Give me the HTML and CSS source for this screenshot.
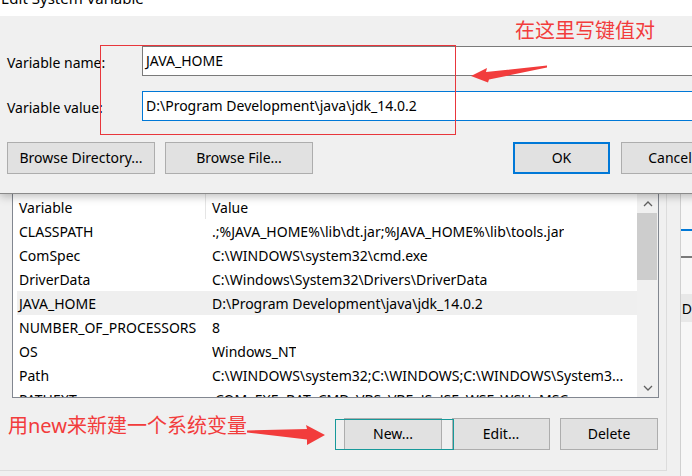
FILE: index.html
```html
<!DOCTYPE html>
<html>
<head>
<meta charset="utf-8">
<link rel="stylesheet" href="styles.css">
</head>
<body>
<div class="screen">
  <div class="dialog">
    <div class="titlebar"><span class="title">Edit System Variable</span></div>
    <div class="dlg-body">
      <div class="field">
        <span class="label">Variable name:</span>
        <div class="input">JAVA_HOME</div>
      </div>
      <div class="field">
        <span class="label">Variable value:</span>
        <div class="input focus">D:\Program Development\java\jdk_14.0.2</div>
      </div>
      <div class="btnrow">
        <div class="btngroup">
          <div class="btn wide">Browse Directory...</div>
          <div class="btn wide">Browse File...</div>
        </div>
        <div class="btngroup right">
          <div class="btn default">OK</div>
          <div class="btn">Cancel</div>
        </div>
      </div>
    </div>
  </div>

  <div class="bg-area">
    <div class="bg-window">
      <div class="listbox">
        <div class="table">
          <div class="thead">
            <div class="th c1">Variable</div>
            <div class="th c2">Value</div>
          </div>
          <div class="row"><span class="c1">CLASSPATH</span><span class="c2">.;%JAVA_HOME%\lib\dt.jar;%JAVA_HOME%\lib\tools.jar</span></div>
          <div class="row"><span class="c1">ComSpec</span><span class="c2">C:\WINDOWS\system32\cmd.exe</span></div>
          <div class="row"><span class="c1">DriverData</span><span class="c2">C:\Windows\System32\Drivers\DriverData</span></div>
          <div class="row sel"><span class="c1">JAVA_HOME</span><span class="c2">D:\Program Development\java\jdk_14.0.2</span></div>
          <div class="row"><span class="c1">NUMBER_OF_PROCESSORS</span><span class="c2">8</span></div>
          <div class="row"><span class="c1">OS</span><span class="c2">Windows_NT</span></div>
          <div class="row"><span class="c1">Path</span><span class="c2">C:\WINDOWS\system32;C:\WINDOWS;C:\WINDOWS\System3...</span></div>
          <div class="row"><span class="c1">PATHEXT</span><span class="c2">.COM;.EXE;.BAT;.CMD;.VBS;.VBE;.JS;.JSE;.WSF;.WSH;.MSC</span></div>
        </div>
        <div class="scrollbar">
          <div class="sb-btn"><svg width="10" height="6" viewBox="0 0 10 6"><path d="M1 5 L5 1 L9 5" fill="none" stroke="#606060" stroke-width="1.3"/></svg></div>
          <div class="sb-thumb"></div>
          <div class="sb-track"></div>
          <div class="sb-btn"><svg width="10" height="6" viewBox="0 0 10 6"><path d="M1 1 L5 5 L9 1" fill="none" stroke="#606060" stroke-width="1.3"/></svg></div>
        </div>
      </div>
      <div class="actions">
        <div class="btn">New...</div>
        <div class="btn">Edit...</div>
        <div class="btn">Delete</div>
      </div>
    </div>
    <div class="side-strip">
      <div class="side-panel">
        <div class="side-blue"></div>
        <div class="side-grey"></div>
        <div class="side-row">D</div>
      </div>
    </div>
  </div>

  <div class="anno-rect-red"></div>
  <div class="anno-text-top">在这里写键值对</div>
  <svg class="anno-arrow-top" width="692" height="476" viewBox="0 0 692 476">
    <path d="M471 76 L487 68 L486 72 L547 65.5 L547 67.5 L489 79.5 L488 82.5 Z" fill="#f23c3c"/>
  </svg>
  <div class="anno-text-bottom">用new来新建一个系统变量</div>
  <svg class="anno-arrow-bottom" width="692" height="476" viewBox="0 0 692 476">
    <path d="M247 430.5 L307 429 L306 425 L325 435 L307 445 L307 439.5 L247 432.5 Z" fill="#f23c3c"/>
  </svg>
  <div class="anno-rect-teal"></div>
</div>
</body>
</html>
```

FILE: styles.css
```css
* { box-sizing: border-box; }
html, body { margin: 0; padding: 0; }
body {
  width: 692px;
  height: 476px;
  overflow: hidden;
  background: #f0f0f0;
  font-family: "Segoe UI", "Noto Sans", sans-serif;
  font-size: 14px;
  color: #000;
}
.screen {
  position: relative;
  width: 692px;
  height: 476px;
  overflow: hidden;
}

/* ---------- Edit dialog ---------- */
.dialog {
  position: relative;
  z-index: 2;
  width: 760px;
  height: 194px;
  background: #f0f0f0;
  border-bottom: 1px solid #8a8a8a;
  box-shadow: 0 2px 9px rgba(0, 0, 0, 0.28);
}
.titlebar {
  height: 16px;
  background: #fff;
  overflow: hidden;
}
.title {
  display: block;
  margin-top: -12px;
  line-height: 20px;
  font-size: 15px;
  padding-left: 1px;
}
.dlg-body {
  padding: 30px 0 0 7px;
}
.field {
  display: flex;
  align-items: center;
  height: 30px;
  margin-bottom: 15px;
}
.label {
  width: 135px;
  padding-top: 2px;
}
.input {
  flex: 1;
  height: 30px;
  background: #fff;
  border: 1px solid #7a7a7a;
  padding: 3px 3px 0;
  line-height: 22px;
}
.input.focus { border-color: #0078d7; }
.btnrow {
  display: flex;
  margin-top: 21px;
}
.btngroup { display: flex; gap: 10px; }
.btngroup.right { margin-left: 200px; gap: 11px; }
.btn {
  height: 32px;
  width: 98px;
  background: #e1e1e1;
  border: 1px solid #adadad;
  display: flex;
  align-items: center;
  justify-content: center;
  padding-bottom: 1px;
}
.btn.wide { width: 148px; }
.btn.default { border: 2px solid #0078d7; width: 97px; }

/* ---------- background window ---------- */
.bg-area {
  display: flex;
  height: 282px;
}
.bg-window {
  width: 673px;
  height: 277px;
  border-right: 1px solid #dcdcdc;
  border-bottom: 1px solid #dcdcdc;
  padding-left: 12px;
}
.listbox {
  width: 647px;
  height: 204px;
  display: flex;
  background: #fff;
  border: 1px solid #828790;
  border-top: none;
}
.table {
  width: 624px;
  overflow: hidden;
}
.thead {
  display: flex;
  height: 25px;
  align-items: stretch;
}
.th {
  display: flex;
  align-items: center;
  padding-top: 1px;
}
.th.c1 {
  width: 193px;
  padding-left: 6px;
  border-right: 1px solid #e5e5e5;
}
.th.c2 { padding-left: 6px; }
.row {
  display: flex;
  align-items: center;
  height: 24px;
  margin-left: 4px;
  padding-left: 2px;
  white-space: nowrap;
}
.row.sel { background: #efefef; }
.row .c1 { width: 193px; flex: none; }
.row .c2 { overflow: hidden; }
.scrollbar {
  width: 21px;
  display: flex;
  flex-direction: column;
  background: #f0f0f0;
}
.sb-btn {
  height: 19px;
  display: flex;
  align-items: center;
  justify-content: center;
}
.sb-thumb {
  height: 67px;
  margin-right: 1px;
  background: #cdcdcd;
}
.sb-track { flex: 1; }
.actions {
  width: 647px;
  display: flex;
  justify-content: flex-end;
  gap: 10px;
  margin-top: 20px;
  padding-right: 1px;
}

/* ---------- right strip (window behind) ---------- */
.side-strip {
  flex: 1;
  padding-left: 13px;
}
.side-panel {
  height: 282px;
  background: #f7f7f7;
  border-left: 1px solid #d0d0d0;
  padding-top: 35px;
  overflow: hidden;
}
.side-blue { height: 2px; background: #0078d7; }
.side-grey { height: 2px; background: #7a7a7a; margin-top: 25px; }
.side-row {
  margin-top: 36px;
  height: 28px;
  background: #e8e8e8;
  line-height: 30px;
  padding-left: 1px;
}

/* ---------- annotations (overlay) ---------- */
.anno-rect-red {
  position: absolute;
  z-index: 5;
  left: 100px;
  top: 45px;
  width: 356px;
  height: 90px;
  border: 1px solid #e8363c;
}
.anno-text-top,
.anno-text-bottom {
  position: absolute;
  z-index: 5;
  color: #f23c3c;
  font-family: "Noto Sans", "Noto Sans CJK SC", sans-serif;
  font-size: 20px;
  line-height: 24px;
  white-space: nowrap;
}
.anno-text-top { left: 515px; top: 19px; }
.anno-text-bottom { left: 8px; top: 414px; }
.anno-arrow-top,
.anno-arrow-bottom {
  position: absolute;
  z-index: 5;
  left: 0;
  top: 0;
  pointer-events: none;
}
.anno-rect-teal {
  position: absolute;
  z-index: 5;
  left: 335px;
  top: 419px;
  width: 119px;
  height: 31px;
  border: 1px solid #17999a;
}
```
